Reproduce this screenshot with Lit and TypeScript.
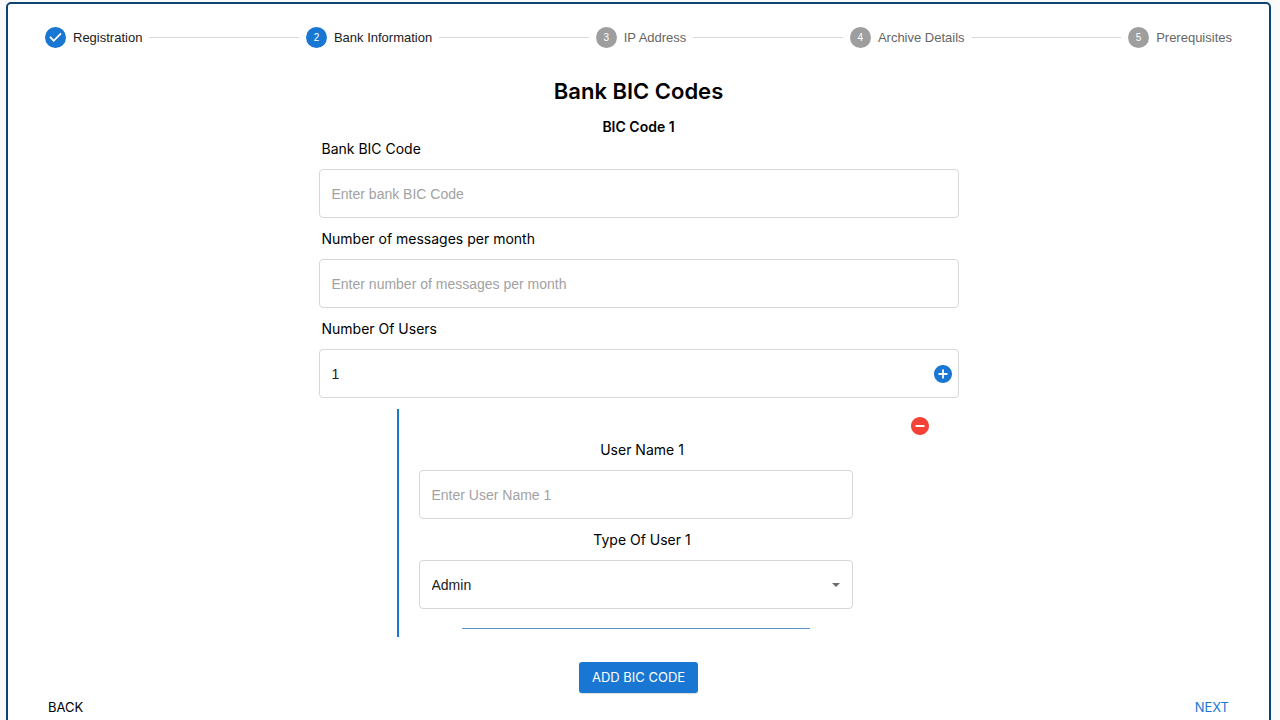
import { LitElement, html, css, svg, nothing } from "lit";
import { customElement, state } from "lit/decorators.js";

const STEPS = ["Registration", "Bank Information", "IP Address", "Archive Details", "Prerequisites"];

const circleIcon = (inner: unknown, viewBox = "2 2 20 20") => html`
  <svg class="glyph" viewBox=${viewBox} aria-hidden="true">${inner}</svg>
`;
const checkCircle = svg`<path fill="currentColor" d="M12 0a12 12 0 1 0 0 24 12 12 0 0 0 0-24zm-2 17l-5-5 1.4-1.4 3.6 3.6 7.6-7.6L19 8l-9 9z"/>`;
const addCircle = svg`<path fill="currentColor" d="M12 2C6.48 2 2 6.48 2 12s4.48 10 10 10 10-4.48 10-10S17.52 2 12 2zm5 11h-4v4h-2v-4H7v-2h4V7h2v4h4v2z"/>`;
const removeCircle = svg`<path fill="currentColor" d="M12 2C6.48 2 2 6.48 2 12s4.48 10 10 10 10-4.48 10-10S17.52 2 12 2zm5 11H7v-2h10v2z"/>`;

@customElement("step-bar")
export class StepBar extends LitElement {
  static properties = { current: { type: Number } };
  declare current: number;

  constructor() {
    super();
    this.current = 1;
  }

  static styles = css`
    :host { display: block; }
    .steps {
      display: flex;
      align-items: center;
      gap: 7px;
      margin: 0;
      padding: 0;
      list-style: none;
      font: 13px/20px "Liberation Sans", Arial, sans-serif;
      color: #666;
    }
    .step { display: flex; align-items: center; gap: 7px; white-space: nowrap; }
    .reached { color: #212121; }
    .badge {
      display: grid;
      place-items: center;
      width: 21px;
      height: 21px;
      border-radius: 50%;
      background: #9e9e9e;
      color: #fff;
      font-size: 10px;
    }
    .reached .badge { background: #1976d2; }
    .done .badge { background: none; color: #1976d2; }
    .glyph { display: block; width: 21px; height: 21px; }
    .line { flex: 1; height: 1px; background: #d8d8d8; }
  `;

  render() {
    return html`<ol class="steps">
      ${STEPS.map((name, i) => {
        const cls = i < this.current ? "step reached done" : i === this.current ? "step reached" : "step";
        return html`
          ${i ? html`<li class="line" aria-hidden="true"></li>` : nothing}
          <li class=${cls}>
            <span class="badge">${i < this.current ? circleIcon(checkCircle, "0 0 24 24") : i + 1}</span>
            <span>${name}</span>
          </li>`;
      })}
    </ol>`;
  }
}

@customElement("app-root")
export class AppRoot extends LitElement {
  @state() private users = 1;

  static styles = css`
    :host {
      display: block;
      min-height: 100vh;
      box-sizing: border-box;
      padding: 2px 9px 8px 6px;
      background: #fafafa;
      color: #000;
      font: 14px/20px Inter, sans-serif;
    }
    *, *::before, *::after { box-sizing: border-box; }
    .panel {
      border: 2px solid #0f4470;
      border-radius: 5px;
      background: #fff;
      padding: 23px 37px 16px;
    }
    .form { max-width: 640px; margin: 0 auto; }
    h1, h2 { margin: 0; text-align: center; font-weight: 600; }
    h1 { margin-top: 28px; font-size: 22px; line-height: 30px; }
    h2 { margin: 11px 0 2px; font-size: 14px; line-height: 20px; }
    .field { display: flex; flex-direction: column; gap: 10px; margin-bottom: 11px; }
    label { padding-left: 3px; }
    .box {
      display: flex;
      align-items: center;
      height: 49px;
      padding: 0 12px;
      border: 1px solid #d8d8d8;
      border-radius: 4px;
      background: #fff;
    }
    .box:focus-within { border-color: #1976d2; }
    input, select {
      flex: 1;
      min-width: 0;
      height: 100%;
      padding: 0;
      border: 0;
      outline: 0;
      background: none;
      appearance: none;
      color: #212121;
      font: 14px "Liberation Sans", Arial, sans-serif;
    }
    input::placeholder { color: #a2a2a2; opacity: 1; }
    button { border: 0; background: none; cursor: pointer; font: 13px/20px Inter, sans-serif; }
    .icon { display: block; padding: 0; color: #1976d2; }
    .box .icon { margin-right: -6px; }
    .glyph { display: block; width: 18px; height: 18px; }
    .arrow { width: 8px; height: 4px; color: #6b6b6b; pointer-events: none; }
    .user {
      display: flex;
      flex-direction: column;
      margin-left: 78px;
      padding: 8px 0 8px 20px;
      border-left: 2px solid #1976d2;
    }
    .remove { align-self: flex-end; margin: 0 30px 5px 0; color: #f44336; }
    .user .field { margin-right: 106px; }
    .user label { padding-left: 13px; text-align: center; }
    .rule {
      align-self: stretch;
      height: 1px;
      margin: 8px 149px 0 43px;
      border: 0;
      background: #5a93c4;
    }
    .add {
      display: block;
      margin: 25px auto 0;
      padding: 5px 13px 6px;
      border-radius: 3px;
      background: #1976d2;
      color: #fff;
      box-shadow: 0 1px 1px rgba(0, 0, 0, 0.15);
    }
    .nav { display: flex; justify-content: space-between; margin-top: 4px; }
    .nav button { padding: 0 3px; }
    .nav .next { color: #1976d2; }
  `;

  private userBlock(n: number) {
    return html`<section class="user">
      <button class="icon remove" aria-label="Remove user ${n}"
        @click=${() => (this.users = Math.max(1, this.users - 1))}>${circleIcon(removeCircle)}</button>
      <div class="field">
        <label for="name-${n}">User Name ${n}</label>
        <div class="box"><input id="name-${n}" type="text" placeholder="Enter User Name ${n}" /></div>
      </div>
      <div class="field">
        <label for="type-${n}">Type Of User ${n}</label>
        <div class="box">
          <select id="type-${n}"><option>Admin</option></select>
          <svg class="arrow" viewBox="0 0 10 5" aria-hidden="true"><path fill="currentColor" d="M0 0h10L5 5z"/></svg>
        </div>
      </div>
      <hr class="rule" />
    </section>`;
  }

  render() {
    return html`<main class="panel">
      <step-bar .current=${1}></step-bar>
      <div class="form">
        <h1>Bank BIC Codes</h1>
        <h2>BIC Code 1</h2>
        <div class="field">
          <label for="bic">Bank BIC Code</label>
          <div class="box"><input id="bic" type="text" placeholder="Enter bank BIC Code" /></div>
        </div>
        <div class="field">
          <label for="messages">Number of messages per month</label>
          <div class="box"><input id="messages" type="text" placeholder="Enter number of messages per month" /></div>
        </div>
        <div class="field">
          <label for="users">Number Of Users</label>
          <div class="box">
            <input id="users" type="text" .value=${String(this.users)} readonly />
            <button class="icon" aria-label="Add user" @click=${() => this.users++}>${circleIcon(addCircle)}</button>
          </div>
        </div>
        ${Array.from({ length: this.users }, (_, i) => this.userBlock(i + 1))}
        <button class="add">ADD BIC CODE</button>
      </div>
      <nav class="nav">
        <button class="back">BACK</button>
        <button class="next">NEXT</button>
      </nav>
    </main>`;
  }
}
